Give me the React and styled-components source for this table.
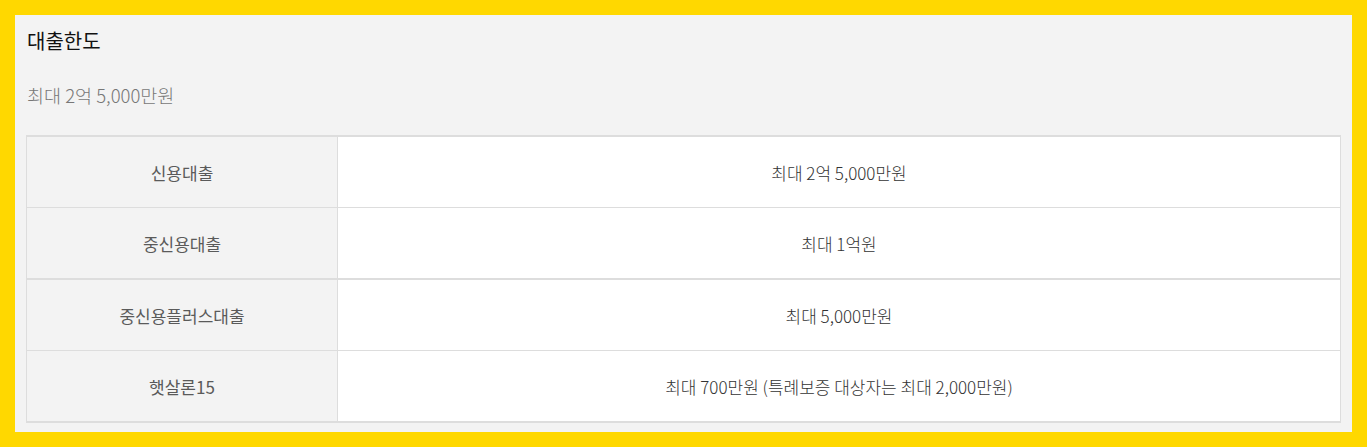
import React from 'react';
import styled, { createGlobalStyle } from 'styled-components';

const GlobalStyle = createGlobalStyle`
  html, body {
    margin: 0;
    padding: 0;
    background: #ffd800;
  }
  body {
    font-family: "Noto Sans CJK KR", "Noto Sans", sans-serif;
  }
`;

const Frame = styled.div`
  padding: 15px;
  background: #ffd800;
  height: 447px;
  box-sizing: border-box;
`;

const Panel = styled.section`
  background: #f3f3f3;
  height: 100%;
  box-sizing: border-box;
  padding: 15px 11px 0 11px;
  display: flex;
  flex-direction: column;
`;

const Title = styled.h2`
  margin: 0 0 0 1px;
  font-size: 20px;
  font-weight: 400;
  line-height: 22px;
  color: #111;
`;

const Summary = styled.p`
  margin: 32px 0 0 1px;
  font-size: 18.5px;
  font-weight: 300;
  line-height: 22px;
  color: #777;
`;

const Table = styled.div`
  margin-top: 29px;
  border-left: 1px solid #ddd;
  border-right: 1px solid #ddd;
  border-bottom: 2px solid #ddd;
  background: #fff;
`;

const Group = styled.div`
  border-top: 2px solid #ddd;
`;

const Row = styled.div`
  display: grid;
  grid-template-columns: 311px 1fr;
  height: 70px;
  & + & {
    border-top: 1px solid #ddd;
  }
`;

const Head = styled.div`
  display: flex;
  align-items: center;
  justify-content: center;
  background: #f3f3f3;
  border-right: 1px solid #ddd;
  font-size: 17px;
  color: #5a5a5a;
`;

const Value = styled.div`
  display: flex;
  align-items: center;
  justify-content: center;
  font-size: 17px;
  font-weight: 300;
  color: #333;
`;

const groups = [
  [
    ['신용대출', '최대 2억 5,000만원'],
    ['중신용대출', '최대 1억원'],
  ],
  [
    ['중신용플러스대출', '최대 5,000만원'],
    ['햇살론15', '최대 700만원 (특례보증 대상자는 최대 2,000만원)'],
  ],
];

export default function App() {
  return (
    <>
      <GlobalStyle />
      <Frame>
        <Panel>
          <Title>대출한도</Title>
          <Summary>최대 2억 5,000만원</Summary>
          <Table>
            {groups.map((rows, i) => (
              <Group key={i}>
                {rows.map(([name, limit]) => (
                  <Row key={name}>
                    <Head>{name}</Head>
                    <Value>{limit}</Value>
                  </Row>
                ))}
              </Group>
            ))}
          </Table>
        </Panel>
      </Frame>
    </>
  );
}
